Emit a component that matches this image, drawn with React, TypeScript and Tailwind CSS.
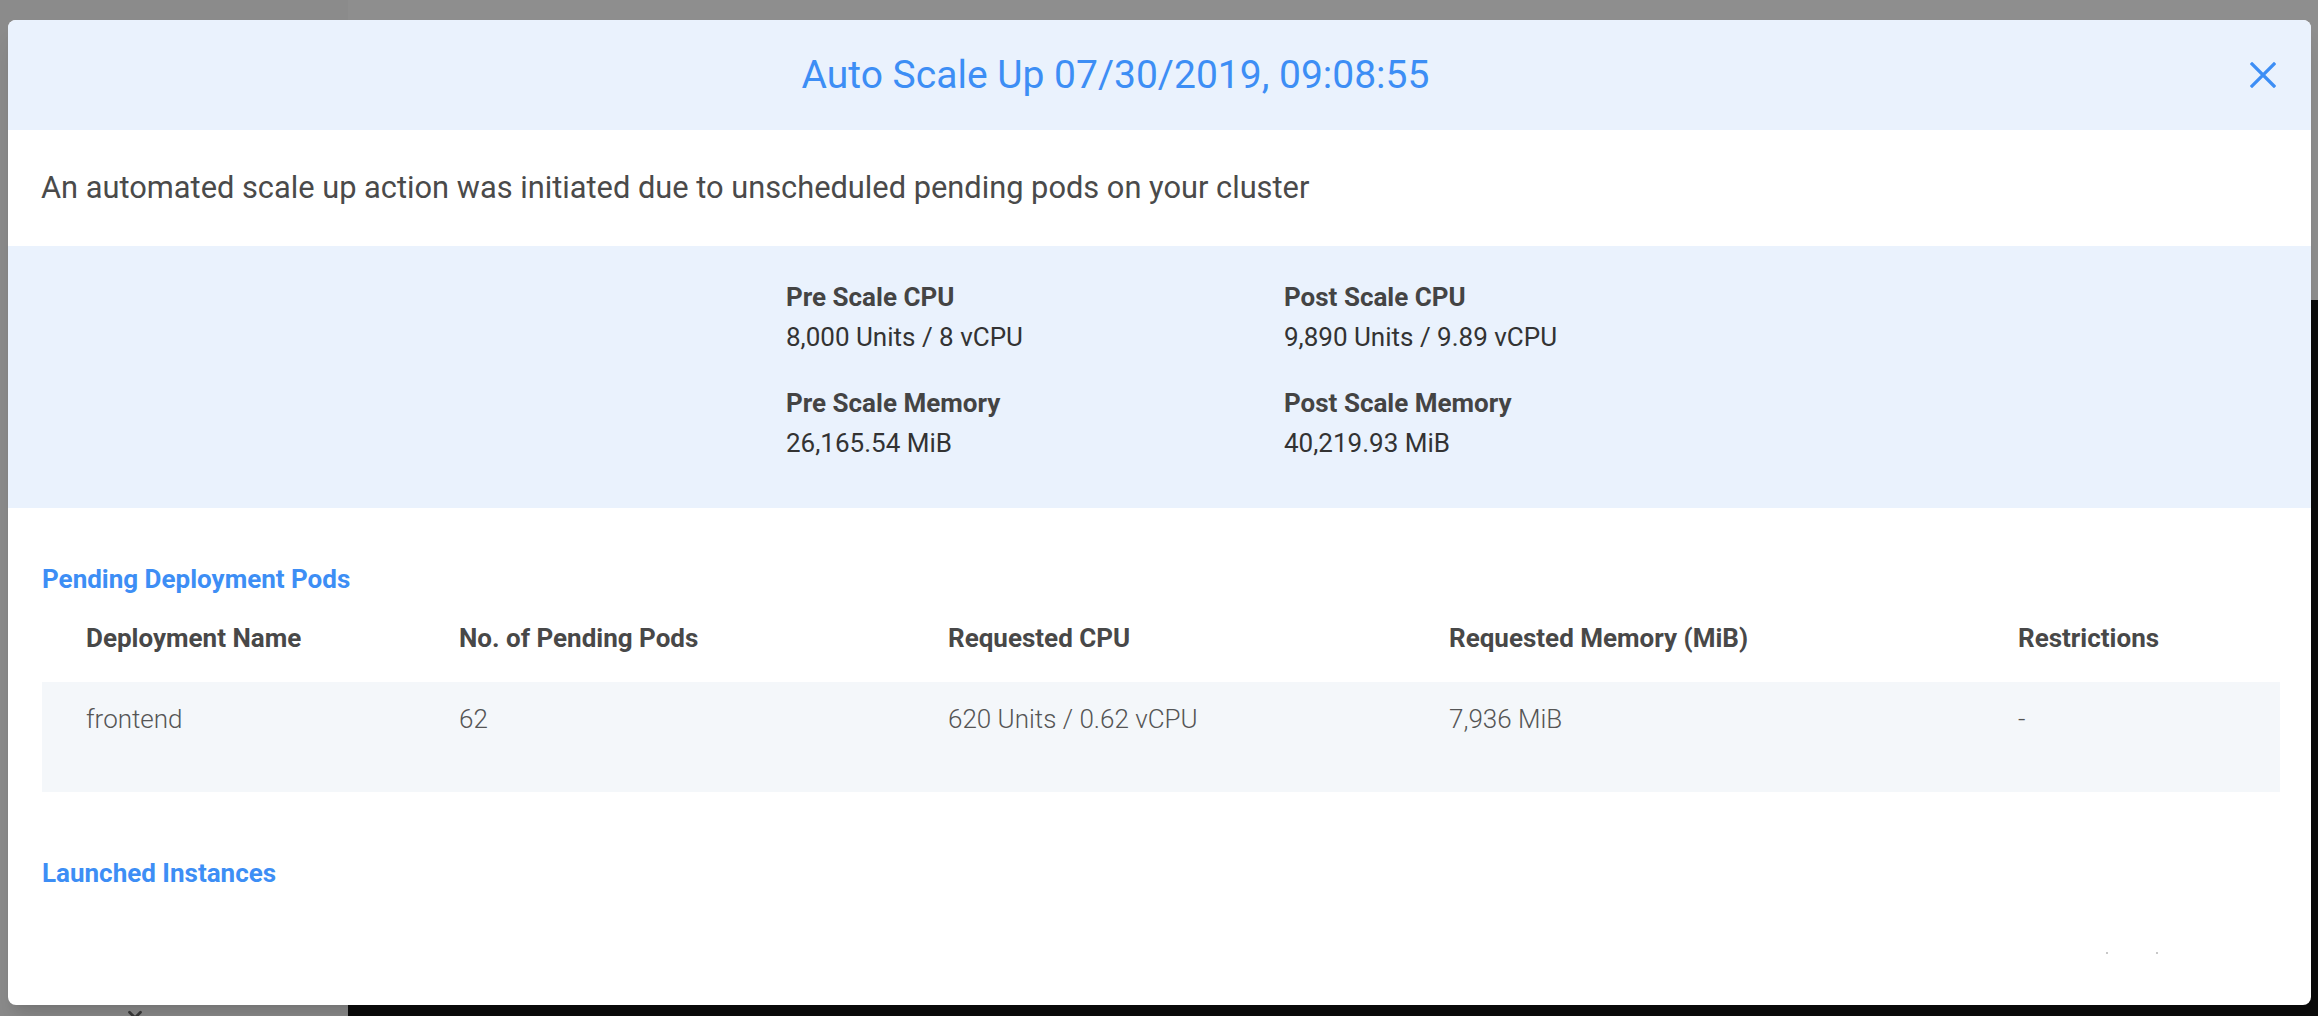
import { ChevronDown } from "lucide-react";

const stats = [
  { label: "Pre Scale CPU", value: "8,000 Units / 8 vCPU" },
  { label: "Post Scale CPU", value: "9,890 Units / 9.89 vCPU" },
  { label: "Pre Scale Memory", value: "26,165.54 MiB" },
  { label: "Post Scale Memory", value: "40,219.93 MiB" },
];

const columns = [
  "Deployment Name",
  "No. of Pending Pods",
  "Requested CPU",
  "Requested Memory (MiB)",
  "Restrictions",
];

const rows = [["frontend", "62", "620 Units / 0.62 vCPU", "7,936 MiB", "-"]];

const CloseIcon = () => (
  <svg className="w-[26px] h-[26px]" viewBox="0 0 26 26" fill="none">
    <path
      d="M2 2L24 24M24 2L2 24"
      stroke="currentColor"
      strokeWidth={3.2}
      strokeLinecap="square"
    />
  </svg>
);

export default function App() {
  return (
    <div className="relative w-[2318px] h-[1016px] overflow-hidden font-[Roboto,sans-serif] bg-[#8e8e8e]">
      {/* page behind the overlay */}
      <div className="flex h-full">
        <aside className="w-[348px] h-full bg-[#8b8b8b] flex flex-col justify-end items-start pl-[124px]">
          <ChevronDown className="w-[22px] h-[22px] text-[#3a3a3a] mb-[-10px]" strokeWidth={3} />
        </aside>
        <main className="flex-1 flex flex-col">
          <div className="h-[300px] bg-[#8e8e8e]" />
          <div className="flex-1 bg-[#0b0b0b]" />
        </main>
      </div>

      {/* modal */}
      <div className="absolute left-[8px] top-[20px] w-[2303px] h-[985px] bg-white rounded-lg overflow-hidden shadow-xl flex flex-col">
        <header className="h-[110px] shrink-0 bg-[#eaf2fd] flex items-center">
          <h2 className="flex-1 text-center text-[39px] text-[#3d8ef5]">
            Auto Scale Up 07/30/2019, 09:08:55
          </h2>
          <div className="w-[88px] flex justify-start pl-[27px]">
            <button className="text-[#3d8ef5]">
              <CloseIcon />
            </button>
          </div>
        </header>

        <div className="h-[116px] shrink-0 flex items-center px-[33px]">
          <p className="text-[30.8px] text-[#4a4a4a]">
            An automated scale up action was initiated due to unscheduled pending pods on your cluster
          </p>
        </div>

        <section className="h-[262px] shrink-0 bg-[#eaf2fd] flex justify-center items-start pt-[31px]">
          <div className="w-[747px] grid grid-cols-[498px_249px] content-start gap-y-[26px] text-[26px] leading-[40px]">
            {stats.map((s) => (
              <div key={s.label} className="whitespace-nowrap">
                <div className="font-bold text-[#444]">{s.label}</div>
                <div className="text-[#333]">{s.value}</div>
              </div>
            ))}
          </div>
        </section>

        <section className="pl-[34px] pr-[31px] pt-[52px]">
          <h3 className="text-[26px] leading-[39px] font-bold text-[#3d8ef5]">
            Pending Deployment Pods
          </h3>
          <div className="grid grid-cols-[373px_489px_501px_569px_1fr] text-[26px] leading-[39px] pt-[20px] pb-[24px]">
            {columns.map((c) => (
              <div key={c} className="pl-[44px] font-bold text-[#484848] whitespace-nowrap">
                {c}
              </div>
            ))}
          </div>
          {rows.map((r) => (
            <div
              key={r[0]}
              className="grid grid-cols-[373px_489px_501px_569px_1fr] h-[110px] pt-[18px] bg-[#f4f7fa] text-[26px] leading-[39px] font-light text-[#555]"
            >
              {r.map((cell, i) => (
                <div key={i} className="pl-[44px] whitespace-nowrap">
                  {cell}
                </div>
              ))}
            </div>
          ))}
        </section>

        <section className="pl-[34px] pr-[31px] pt-[62px]">
          <h3 className="text-[26px] leading-[39px] font-bold text-[#3d8ef5]">
            Launched Instances
          </h3>
          <div className="flex gap-[48px] pl-[2064px] pt-[59px]">
            <span className="w-[2px] h-[2px] bg-[#c8c8c8]" />
            <span className="w-[2px] h-[2px] bg-[#c8c8c8]" />
          </div>
        </section>
      </div>
    </div>
  );
}
